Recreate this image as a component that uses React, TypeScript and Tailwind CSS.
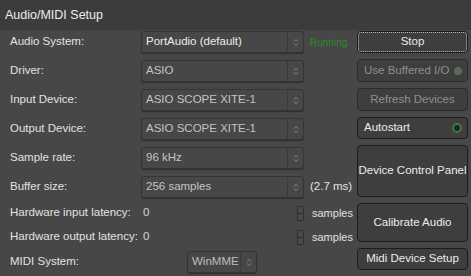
import React from 'react';

const font = { fontFamily: '"Liberation Sans", Arial, sans-serif' };

const Arrows: React.FC = () => (
  <svg width="6" height="9" viewBox="0 0 6 9" className="text-[#8c8c8c]">
    <path d="M1 3.5 L3 1.5 L5 3.5" fill="none" stroke="currentColor" strokeWidth="1" />
    <path d="M1 5.5 L3 7.5 L5 5.5" fill="none" stroke="currentColor" strokeWidth="1" />
  </svg>
);

interface ComboProps {
  value: string;
  active?: boolean;
}

const Combo: React.FC<ComboProps> = ({ value, active }) => (
  <div className="flex h-[22px] w-[163px] items-center rounded-[3px] border border-[#353535] bg-[#474747] shadow-[0_1px_1px_rgba(0,0,0,0.35)]">
    <span className={`flex-1 truncate pl-[4px] text-[11.5px] ${active ? 'text-[#ececec]' : 'text-[#c4c4c4]'}`}>{value}</span>
    <div className="flex h-full w-[16px] items-center justify-center border-l border-[#3a3a3a]">
      <Arrows />
    </div>
  </div>
);

const Spin: React.FC = () => (
  <div className="flex h-[15px] w-[7px] flex-col">
    <div className="flex-1 rounded-t-[2px] border border-[#2f2f2f] bg-[#4a4a4a]" />
    <div className="flex-1 rounded-b-[2px] border border-t-0 border-[#2f2f2f] bg-[#4a4a4a]" />
  </div>
);

const Row: React.FC<{ label: string; h?: string; children?: React.ReactNode }> = ({ label, h = 'h-[22px]', children }) => (
  <div className={`flex ${h} items-center`}>
    <span className="w-[131px] whitespace-nowrap text-[11.5px] text-[#e2e2e2]">{label}</span>
    {children}
  </div>
);

const Btn: React.FC<{ label: string; h: string; disabled?: boolean; focus?: boolean; led?: 'dim' | 'on' }> = ({
  label,
  h,
  disabled,
  focus,
  led,
}) => (
  <div
    className={`flex ${h} w-[111px] items-center whitespace-nowrap rounded-[4px] border ${
      disabled ? 'border-[#2c2c2c] text-[#8e8e8e]' : 'border-[#1c1c1c] text-[#ececec]'
    } bg-[#3e3e3e] ${led ? 'justify-between pl-[6px] pr-[5px]' : 'justify-center'} text-[11.5px] ${
      focus ? 'outline-1 outline-dotted outline-[#bdbdbd] -outline-offset-2' : ''
    }`}
  >
    <span>{label}</span>
    {led === 'dim' && <span className="h-[8px] w-[8px] rounded-full bg-[#5a6a5a]" />}
    {led === 'on' && (
      <span className="h-[10px] w-[10px] rounded-full border-2 border-[#3f7a3f] bg-[#1c2a1c]" />
    )}
  </div>
);

export default function App() {
  return (
    <div className="h-[276px] w-[471px] overflow-hidden bg-[#474747]" style={font}>
      <div className="flex h-[30px] items-center bg-[#3c3c3c] pl-[5px] text-[12.5px] text-[#ececec]">
        Audio/MIDI Setup
      </div>
      <div className="flex pt-[1px]">
        <div className="flex flex-col pl-[10px]">
          <div className="flex flex-col gap-[7px]">
            <Row label="Audio System:">
              <Combo value="PortAudio (default)" active />
              <span className="ml-[6px] text-[10px] text-[#2a8a2a]">Running</span>
            </Row>
            <Row label="Driver:">
              <Combo value="ASIO" />
            </Row>
            <Row label="Input Device:">
              <Combo value="ASIO SCOPE XITE-1" />
            </Row>
            <Row label="Output Device:">
              <Combo value="ASIO SCOPE XITE-1" />
            </Row>
            <Row label="Sample rate:">
              <Combo value="96 kHz" />
            </Row>
            <Row label="Buffer size:">
              <Combo value="256 samples" />
              <span className="ml-[6px] text-[11.5px] text-[#e2e2e2]">(2.7 ms)</span>
            </Row>
          </div>
          <div className="mt-[5px] flex flex-col gap-[4px]">
            <Row label="Hardware input latency:" h="h-[20px]">
              <span className="w-[156px] pl-[2px] text-[11.5px] text-[#d8d8d8]">0</span>
              <Spin />
              <span className="ml-[8px] text-[11px] text-[#e2e2e2]">samples</span>
            </Row>
            <Row label="Hardware output latency:" h="h-[20px]">
              <span className="w-[156px] pl-[2px] text-[11.5px] text-[#d8d8d8]">0</span>
              <Spin />
              <span className="ml-[8px] text-[11px] text-[#e2e2e2]">samples</span>
            </Row>
          </div>
          <div className="mt-[4px]">
            <Row label="MIDI System:">
              <div className="ml-[46px] flex h-[22px] w-[70px] items-center rounded-[3px] border border-[#353535] bg-[#474747] shadow-[0_1px_1px_rgba(0,0,0,0.35)]">
                <span className="flex-1 pl-[4px] text-[11.5px] text-[#bdbdbd]">WinMME</span>
                <div className="flex h-full w-[16px] items-center justify-center border-l border-[#3a3a3a]">
                  <Arrows />
                </div>
              </div>
            </Row>
          </div>
        </div>
        <div className="ml-auto mr-[3px] flex flex-col gap-[6px]">
          <Btn label="Stop" h="h-[22px]" focus />
          <Btn label="Use Buffered I/O" h="h-[23px]" disabled led="dim" />
          <Btn label="Refresh Devices" h="h-[23px]" disabled />
          <Btn label="Autostart" h="h-[22px]" led="on" />
          <Btn label="Device Control Panel" h="h-[52px]" />
          <Btn label="Calibrate Audio" h="h-[39px]" />
          <Btn label="Midi Device Setup" h="h-[22px]" />
        </div>
      </div>
    </div>
  );
}
